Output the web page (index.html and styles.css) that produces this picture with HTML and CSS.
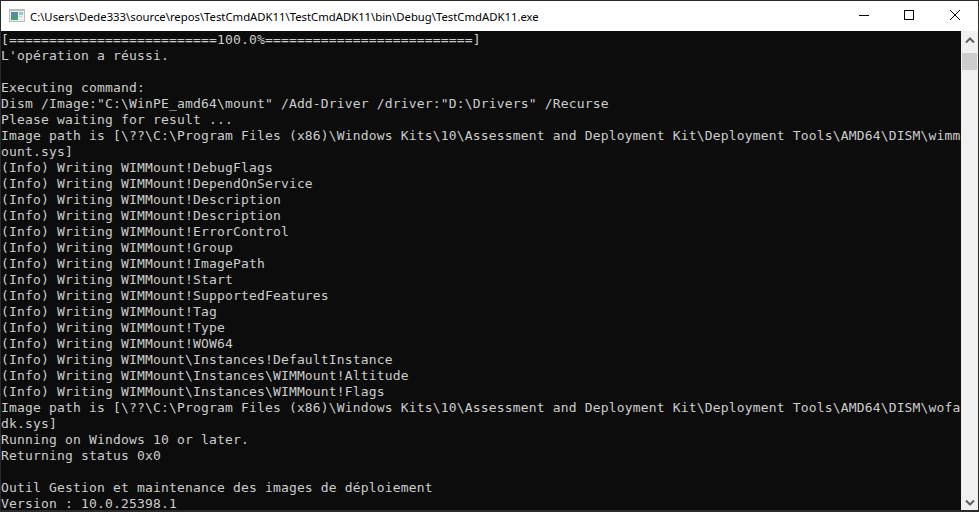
FILE: index.html
```html
<!DOCTYPE html>
<html lang="fr">
<head>
<meta charset="utf-8">
<title>TestCmdADK11</title>
<link rel="stylesheet" href="styles.css">
</head>
<body>
<div class="window">
  <header class="titlebar">
    <svg class="app-icon" width="16" height="16" viewBox="0 0 16 16">
      <defs>
        <linearGradient id="pane" x1="0" y1="0" x2="0.3" y2="1">
          <stop offset="0" stop-color="#4f86b8"/>
          <stop offset="1" stop-color="#4f9c78"/>
        </linearGradient>
      </defs>
      <rect x="0" y="1" width="16" height="13" fill="#b9bdbc"/>
      <rect x="1" y="3" width="14" height="10" fill="#eef0f0"/>
      <rect x="2" y="4" width="7" height="8" fill="url(#pane)"/>
      <rect x="10" y="4" width="4" height="3" fill="#a9c4c4"/>
      <rect x="10" y="8" width="3" height="1" fill="#c6d0ce"/>
    </svg>
    <span class="title">C:\Users\Dede333\source\repos\TestCmdADK11\TestCmdADK11\bin\Debug\TestCmdADK11.exe</span>
    <div class="controls">
      <span class="ctl"><svg width="12" height="12" viewBox="0 0 12 12"><path d="M2 5.5h10" stroke="#000" stroke-width="1" fill="none"/></svg></span>
      <span class="ctl"><svg width="12" height="12" viewBox="0 0 12 12"><rect x="1.5" y="0.5" width="9" height="9" stroke="#000" stroke-width="1" fill="none"/></svg></span>
      <span class="ctl"><svg width="12" height="12" viewBox="0 0 12 12"><path d="M1 0l10 10M11 0L1 10" stroke="#000" stroke-width="1" fill="none"/></svg></span>
    </div>
  </header>
  <div class="client">
    <pre class="console">[==========================100.0%==========================]
L'opération a réussi.

Executing command:
Dism /Image:"C:\WinPE_amd64\mount" /Add-Driver /driver:"D:\Drivers" /Recurse
Please waiting for result ...
Image path is [\??\C:\Program Files (x86)\Windows Kits\10\Assessment and Deployment Kit\Deployment Tools\AMD64\DISM\wimm
ount.sys]
(Info) Writing WIMMount!DebugFlags
(Info) Writing WIMMount!DependOnService
(Info) Writing WIMMount!Description
(Info) Writing WIMMount!Description
(Info) Writing WIMMount!ErrorControl
(Info) Writing WIMMount!Group
(Info) Writing WIMMount!ImagePath
(Info) Writing WIMMount!Start
(Info) Writing WIMMount!SupportedFeatures
(Info) Writing WIMMount!Tag
(Info) Writing WIMMount!Type
(Info) Writing WIMMount!WOW64
(Info) Writing WIMMount\Instances!DefaultInstance
(Info) Writing WIMMount\Instances\WIMMount!Altitude
(Info) Writing WIMMount\Instances\WIMMount!Flags
Image path is [\??\C:\Program Files (x86)\Windows Kits\10\Assessment and Deployment Kit\Deployment Tools\AMD64\DISM\wofa
dk.sys]
Running on Windows 10 or later.
Returning status 0x0

Outil Gestion et maintenance des images de déploiement
Version : 10.0.25398.1</pre>
    <div class="scrollbar">
      <span class="arrow"><svg width="10" height="9" viewBox="0 0 10 9"><path d="M1 7.5L5 3.5l4 4" stroke="#606060" stroke-width="2" fill="none"/></svg></span>
      <div class="track"><div class="thumb"></div></div>
      <span class="arrow"><svg width="10" height="9" viewBox="0 0 10 9"><path d="M1 3.5l4 4 4-4" stroke="#606060" stroke-width="2" fill="none"/></svg></span>
    </div>
  </div>
</div>
</body>
</html>
```
FILE: styles.css
```css
html, body {
  margin: 0;
  height: 100%;
  background: #2a2a28;
  overflow: hidden;
}
.window {
  box-sizing: border-box;
  width: 979px;
  height: 512px;
  padding: 1px 1px 2px 1px;
  display: flex;
  flex-direction: column;
}
.titlebar {
  flex: none;
  height: 30px;
  background: #fff;
  display: flex;
  align-items: center;
  padding-left: 8px;
  gap: 5px;
}
.app-icon { flex: none; }
.title {
  flex: 1;
  font: 11.3px "Noto Sans", "Open Sans", sans-serif;
  color: #000;
  white-space: nowrap;
  overflow: hidden;
}
.controls { display: flex; flex: none; }
.ctl {
  width: 46px;
  height: 30px;
  display: flex;
  align-items: center;
  justify-content: center;
}
.client {
  flex: 1;
  min-height: 0;
  display: flex;
  background: #0c0c0c;
}
.console {
  flex: 1;
  min-width: 0;
  margin: 0;
  overflow: hidden;
  background: #0c0c0c;
  color: #cccccc;
  font-family: "DejaVu Sans Mono", "Liberation Mono", monospace;
  font-size: 13px;
  letter-spacing: 0.17px;
  line-height: 16px;
  padding-top: 1px;
}
.scrollbar {
  flex: none;
  width: 17px;
  background: #f0f0f0;
  display: flex;
  flex-direction: column;
}
.arrow {
  flex: none;
  height: 17px;
  display: flex;
  align-items: center;
  justify-content: center;
}
.track { flex: 1; padding: 5px 1px 0; }
.thumb { height: 17px; background: #cdcdcd; }
```
